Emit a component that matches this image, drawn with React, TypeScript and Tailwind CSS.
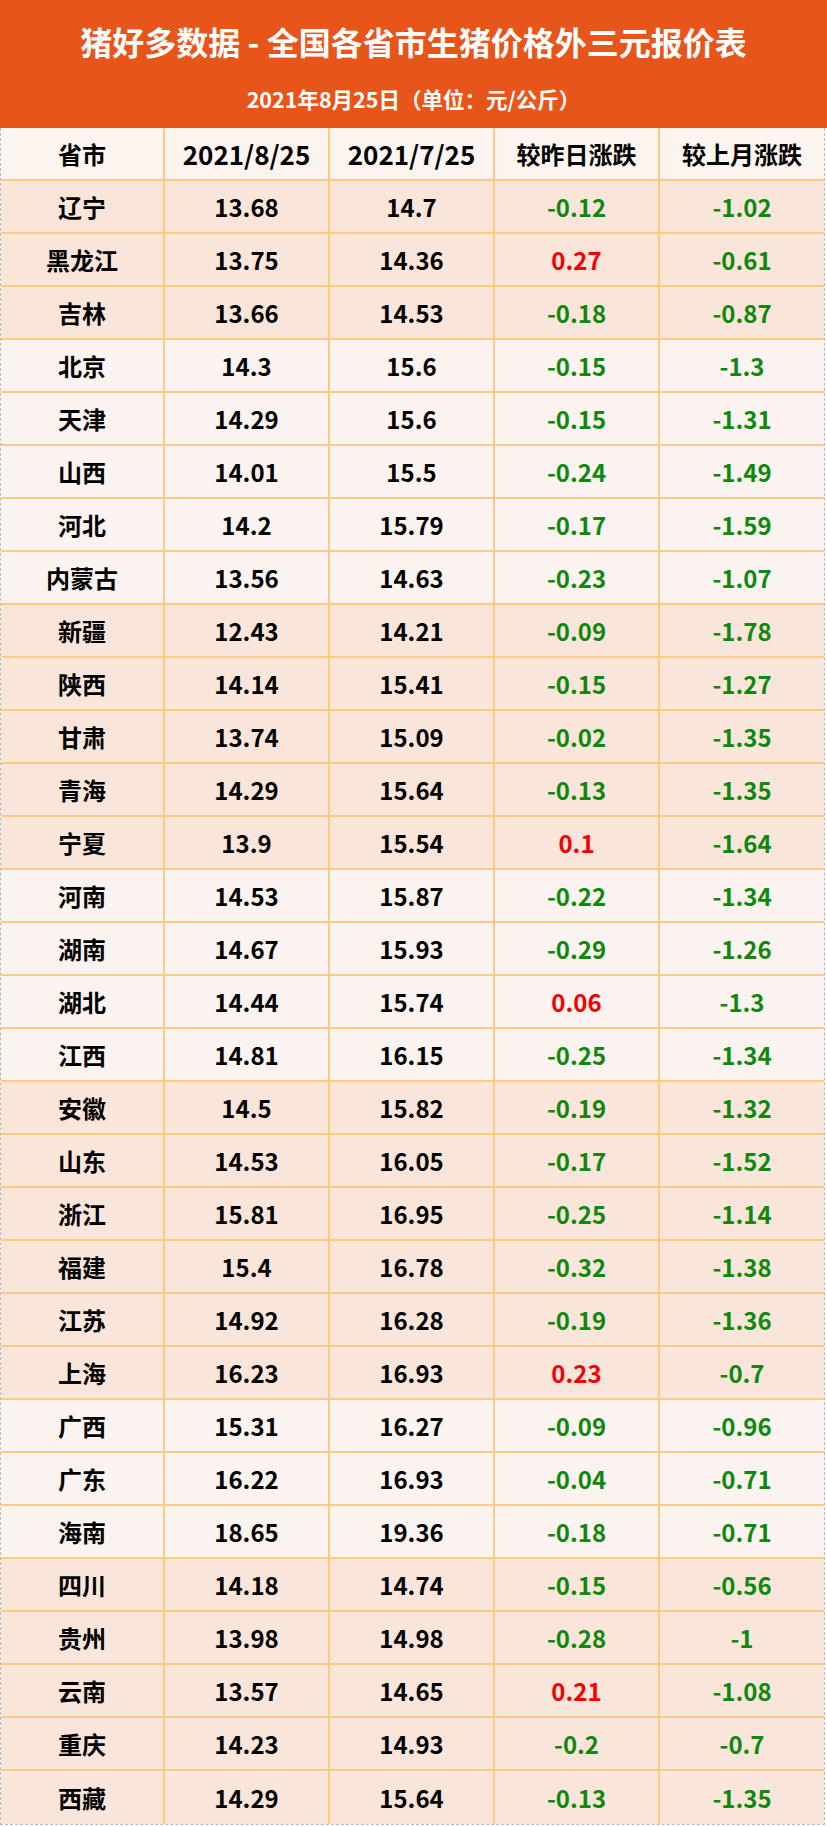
import React from "react";

type Row = {
  name: string;
  aug: string;
  jul: string;
  day: string;
  month: string;
  dark: boolean;
};

// 区域分组: 东北/华北/西北/华中/华东/华南/西南
const groups: { dark: boolean; rows: [string, string, string, string, string][] }[] = [
  {
    dark: true,
    rows: [
      ["辽宁", "13.68", "14.7", "-0.12", "-1.02"],
      ["黑龙江", "13.75", "14.36", "0.27", "-0.61"],
      ["吉林", "13.66", "14.53", "-0.18", "-0.87"],
    ],
  },
  {
    dark: false,
    rows: [
      ["北京", "14.3", "15.6", "-0.15", "-1.3"],
      ["天津", "14.29", "15.6", "-0.15", "-1.31"],
      ["山西", "14.01", "15.5", "-0.24", "-1.49"],
      ["河北", "14.2", "15.79", "-0.17", "-1.59"],
      ["内蒙古", "13.56", "14.63", "-0.23", "-1.07"],
    ],
  },
  {
    dark: true,
    rows: [
      ["新疆", "12.43", "14.21", "-0.09", "-1.78"],
      ["陕西", "14.14", "15.41", "-0.15", "-1.27"],
      ["甘肃", "13.74", "15.09", "-0.02", "-1.35"],
      ["青海", "14.29", "15.64", "-0.13", "-1.35"],
      ["宁夏", "13.9", "15.54", "0.1", "-1.64"],
    ],
  },
  {
    dark: false,
    rows: [
      ["河南", "14.53", "15.87", "-0.22", "-1.34"],
      ["湖南", "14.67", "15.93", "-0.29", "-1.26"],
      ["湖北", "14.44", "15.74", "0.06", "-1.3"],
      ["江西", "14.81", "16.15", "-0.25", "-1.34"],
    ],
  },
  {
    dark: true,
    rows: [
      ["安徽", "14.5", "15.82", "-0.19", "-1.32"],
      ["山东", "14.53", "16.05", "-0.17", "-1.52"],
      ["浙江", "15.81", "16.95", "-0.25", "-1.14"],
      ["福建", "15.4", "16.78", "-0.32", "-1.38"],
      ["江苏", "14.92", "16.28", "-0.19", "-1.36"],
      ["上海", "16.23", "16.93", "0.23", "-0.7"],
    ],
  },
  {
    dark: false,
    rows: [
      ["广西", "15.31", "16.27", "-0.09", "-0.96"],
      ["广东", "16.22", "16.93", "-0.04", "-0.71"],
      ["海南", "18.65", "19.36", "-0.18", "-0.71"],
    ],
  },
  {
    dark: true,
    rows: [
      ["四川", "14.18", "14.74", "-0.15", "-0.56"],
      ["贵州", "13.98", "14.98", "-0.28", "-1"],
      ["云南", "13.57", "14.65", "0.21", "-1.08"],
      ["重庆", "14.23", "14.93", "-0.2", "-0.7"],
      ["西藏", "14.29", "15.64", "-0.13", "-1.35"],
    ],
  },
];

const rows: Row[] = groups.flatMap((g) =>
  g.rows.map(([name, aug, jul, day, month]) => ({ name, aug, jul, day, month, dark: g.dark }))
);

const cell = "flex items-center justify-center border-r-2 border-[#f9cb83] h-full";

function Change({ value }: { value: string }) {
  const up = !value.startsWith("-");
  return <span className={up ? "text-[#f40000]" : "text-[#0e880e]"}>{value}</span>;
}

export default function App() {
  return (
    <div
      className="w-[827px] bg-white"
      style={{ fontFamily: '"Noto Sans CJK SC", "Noto Sans", sans-serif' }}
    >
      {/* 标题 */}
      <div className="h-[128px] bg-[#e8551a] text-white font-bold flex flex-col items-center">
        <div className="text-[32px] leading-none mt-[25px]">猪好多数据 - 全国各省市生猪价格外三元报价表</div>
        <div className="text-[21.5px] leading-none mt-[31px]">2021年8月25日（单位：元/公斤）</div>
      </div>

      {/* 表格 */}
      <div className="border-x border-b border-dashed border-[#b9b9b9] w-[825px]">
        <div className="grid grid-cols-[164px_165px_165px_165px_1fr] h-[53px] border-b-2 border-[#f9cb83] bg-[#fbf4ef] text-[24px] font-bold text-black">
          <div className={cell}>省市</div>
          <div className={`${cell} text-[26px]`}>2021/8/25</div>
          <div className={`${cell} text-[26px]`}>2021/7/25</div>
          <div className={cell}>较昨日涨跌</div>
          <div className="flex items-center justify-center">较上月涨跌</div>
        </div>
        {rows.map((r, i) => (
          <div
            key={r.name}
            className={`grid grid-cols-[164px_165px_165px_165px_1fr] h-[53px] text-[24px] font-bold text-black ${
              i < rows.length - 1 ? "border-b-2 border-[#f9cb83]" : ""
            } ${r.dark ? "bg-[#fae5da]" : "bg-[#fbf3ef]"}`}
          >
            <div className={cell}>{r.name}</div>
            <div className={cell}>{r.aug}</div>
            <div className={cell}>{r.jul}</div>
            <div className={cell}>
              <Change value={r.day} />
            </div>
            <div className="flex items-center justify-center">
              <Change value={r.month} />
            </div>
          </div>
        ))}
      </div>
    </div>
  );
}
